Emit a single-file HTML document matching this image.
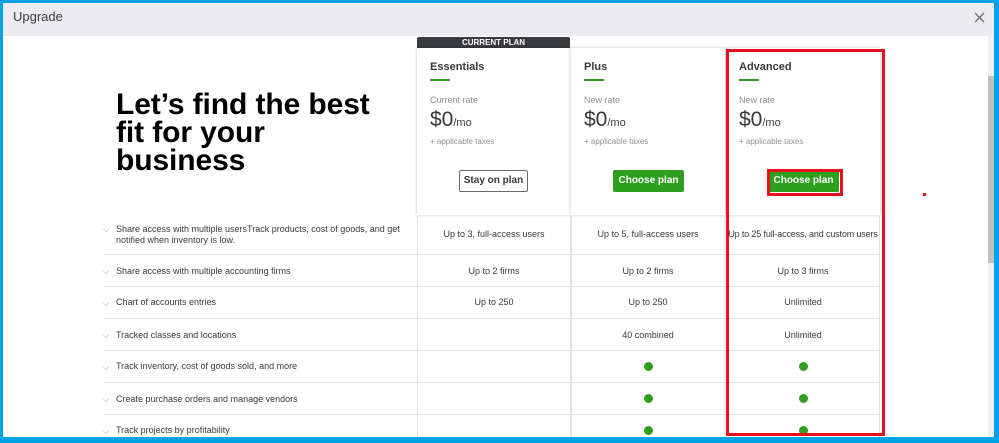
<!DOCTYPE html>
<html><head><style>
*{margin:0;padding:0;box-sizing:border-box}
body{width:999px;height:443px;overflow:hidden;background:#00a2e8;font-family:"Liberation Sans",sans-serif;position:relative}
.win{position:absolute;left:3px;top:3px;width:991px;height:434px;background:#fff;overflow:hidden}
.hdr{position:absolute;left:0;top:0;width:991px;height:33px;background:#ececf0}
.hdr span{position:absolute;left:10px;top:6px;font-size:13px;color:#393a3d}
.x{position:absolute;left:971px;top:9px}
.sb{position:absolute;left:985px;top:33px;width:6px;height:401px;background:#f0f0f0}
.sb i{position:absolute;left:0;top:40px;width:6px;height:187px;background:#c1c1c1}
h1{position:absolute;left:113px;top:88px;font-size:30px;line-height:28px;font-weight:bold;color:#000;letter-spacing:-0.1px;white-space:nowrap}
.abs{position:absolute}
.cp{left:414px;top:34px;width:153px;height:12px;background:#393a3d;color:#fff;font-size:8px;font-weight:bold;text-align:center;line-height:12px;border-radius:2px 2px 0 0}
.card{position:absolute;top:45px;width:154px;height:167px;background:#fff;box-shadow:0 0 3px rgba(0,0,0,.25)}
.card .t{position:absolute;left:13px;top:13px;font-size:11px;font-weight:bold;color:#393a3d}
.card .u{position:absolute;left:13px;top:31px;width:20px;height:2px;background:#2ca01c}
.card .r{position:absolute;left:13px;top:47px;font-size:9px;color:#8d9096}
.card .p{position:absolute;left:13px;top:60px;font-size:21px;color:#393a3d}
.card .p small{font-size:11px}
.card .tx{position:absolute;left:13px;top:89px;font-size:8px;color:#8d9096}
.btn{position:absolute;top:122px;height:22px;font-size:10px;font-weight:bold;line-height:20px;text-align:center;border-radius:2px;white-space:nowrap}
.g{background:#2ca01c;color:#fff;border:1px solid #2ca01c}
.o{border:1px solid #6b6c72;color:#393a3d;background:#fff}
.col{position:absolute;top:212px;width:154px;height:230px;border-left:1px solid #e3e3e6;border-right:1px solid #e3e3e6}
.row{position:absolute;left:102px;width:775px;border-top:1px solid #e3e3e6}
.f{position:absolute;left:113px;font-size:9px;color:#393a3d;line-height:11px}
.cv{position:absolute;left:100px;font-size:8px;color:#8d9096}
.c{position:absolute;width:154px;text-align:center;font-size:9px;color:#393a3d;white-space:nowrap}
.dot{position:absolute;width:9px;height:9px;border-radius:50%;background:#2ca01c}
</style></head><body>
<div class="win">
<div class="hdr"><span>Upgrade</span>
<svg class="x" width="11" height="11" viewBox="0 0 11 11"><path d="M1 1L10 10M10 1L1 10" stroke="#6b6c72" stroke-width="1.3"/></svg></div>
<div class="sb"><i></i></div>
<h1>Let’s find the best<br>fit for your<br>business</h1>
<div class="abs cp">CURRENT PLAN</div>
<div class="card" style="left:414px"><div class="t">Essentials</div><div class="u"></div><div class="r">Current rate</div><div class="p">$0<small>/mo</small></div><div class="tx">+ applicable taxes</div><div class="btn o" style="left:42px;width:69px">Stay on plan</div></div>
<div class="card" style="left:568px"><div class="t">Plus</div><div class="u"></div><div class="r">New rate</div><div class="p">$0<small>/mo</small></div><div class="tx">+ applicable taxes</div><div class="btn g" style="left:42px;width:71px">Choose plan</div></div>
<div class="card" style="left:723px"><div class="t">Advanced</div><div class="u"></div><div class="r">New rate</div><div class="p">$0<small>/mo</small></div><div class="tx">+ applicable taxes</div><div class="btn g" style="left:42px;width:71px">Choose plan</div></div>
<div class="col" style="left:414px"></div><div class="col" style="left:568px"></div><div class="col" style="left:723px"></div>
<div class="row" style="top:251px"></div><div class="row" style="top:283px"></div><div class="row" style="top:315px"></div><div class="row" style="top:347px"></div><div class="row" style="top:379px"></div><div class="row" style="top:411px"></div>
<div class="cv" style="top:222px">⌵</div><div class="f" style="top:221px">Share access with multiple usersTrack products, cost of goods, and get<br>notified when inventory is low.</div>
<div class="cv" style="top:264px">⌵</div><div class="f" style="top:263px">Share access with multiple accounting firms</div>
<div class="cv" style="top:296px">⌵</div><div class="f" style="top:294px">Chart of accounts entries</div>
<div class="cv" style="top:328px">⌵</div><div class="f" style="top:327px">Tracked classes and locations</div>
<div class="cv" style="top:360px">⌵</div><div class="f" style="top:358px">Track inventory, cost of goods sold, and more</div>
<div class="cv" style="top:392px">⌵</div><div class="f" style="top:391px">Create purchase orders and manage vendors</div>
<div class="cv" style="top:424px">⌵</div><div class="f" style="top:422px">Track projects by profitability</div>
<div class="c" style="left:414px;top:226px">Up to 3, full-access users</div>
<div class="c" style="left:568px;top:226px">Up to 5, full-access users</div>
<div class="c" style="left:723px;top:226px;letter-spacing:-0.15px">Up to 25 full-access, and custom users</div>
<div class="c" style="left:414px;top:263px">Up to 2 firms</div>
<div class="c" style="left:568px;top:263px">Up to 2 firms</div>
<div class="c" style="left:723px;top:263px">Up to 3 firms</div>
<div class="c" style="left:414px;top:294px">Up to 250</div>
<div class="c" style="left:568px;top:294px">Up to 250</div>
<div class="c" style="left:723px;top:294px">Unlimited</div>
<div class="c" style="left:568px;top:327px">40 combined</div>
<div class="c" style="left:723px;top:327px">Unlimited</div>
<div class="dot" style="left:641px;top:359px"></div><div class="dot" style="left:796px;top:359px"></div>
<div class="dot" style="left:641px;top:391px"></div><div class="dot" style="left:796px;top:391px"></div>
<div class="dot" style="left:641px;top:423px"></div><div class="dot" style="left:796px;top:423px"></div>
<div class="abs" style="left:723px;top:46px;width:159px;height:387px;border:3px solid #e8111d"></div>
<div class="abs" style="left:764px;top:166px;width:76px;height:27px;border:3px solid #e8111d"></div>
<div class="abs" style="left:920px;top:190px;width:3px;height:3px;background:#e8111d"></div>
</div>
</body></html>
